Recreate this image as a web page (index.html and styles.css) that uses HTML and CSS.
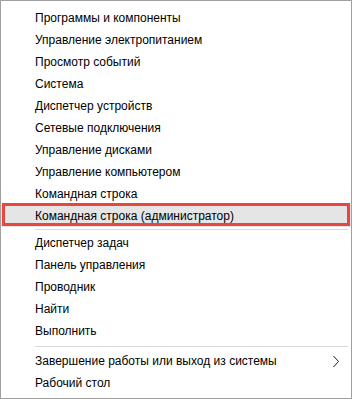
FILE: index.html
```html
<!DOCTYPE html>
<html lang="ru">
<head>
<meta charset="utf-8">
<title>Меню</title>
<link rel="stylesheet" href="styles.css">
</head>
<body>
<div class="menu">
  <div class="item">Программы и компоненты</div>
  <div class="item">Управление электропитанием</div>
  <div class="item">Просмотр событий</div>
  <div class="item">Система</div>
  <div class="item">Диспетчер устройств</div>
  <div class="item">Сетевые подключения</div>
  <div class="item">Управление дисками</div>
  <div class="item">Управление компьютером</div>
  <div class="item">Командная строка</div>
  <div class="item item-hl">Командная строка (администратор)</div>
  <div class="sep"></div>
  <div class="item">Диспетчер задач</div>
  <div class="item">Панель управления</div>
  <div class="item">Проводник</div>
  <div class="item">Найти</div>
  <div class="item">Выполнить</div>
  <div class="sep sep-wide"></div>
  <div class="item item-sub">
    <span>Завершение работы или выход из системы</span>
    <svg class="chev" width="8" height="13" viewBox="0 0 8 13"><polyline points="1.5,1 6.5,6.5 1.5,12" fill="none" stroke="#1a1a3a" stroke-width="1"/></svg>
  </div>
  <div class="item">Рабочий стол</div>
</div>
</body>
</html>
```

FILE: styles.css
```css
html, body {
  margin: 0;
  padding: 0;
  background: #fff;
}
.menu {
  box-sizing: border-box;
  width: 352px;
  height: 399px;
  border: 1px solid #a0a0a0;
  padding-top: 6px;
  background: #fff;
  font-family: "Liberation Sans", Arial, sans-serif;
  font-size: 12px;
  color: #000;
}
.item {
  position: relative;
  height: 22px;
  line-height: 22px;
  padding-left: 34px;
  white-space: nowrap;
}
.item-hl {
  background: #e5e5e5;
}
.item-hl::after {
  content: "";
  position: absolute;
  left: 1px;
  right: 1px;
  top: -2px;
  bottom: 1px;
  border: 3px solid #e8473f;
}
.sep {
  height: 1px;
  background: #d9d9d9;
  margin: 2px 3px 2px 34px;
}
.sep-wide {
  margin: 4px 3px 3px 34px;
}
.item-sub {
  display: flex;
  align-items: center;
  justify-content: space-between;
  padding-right: 11px;
}
.chev {
  display: block;
}
```
